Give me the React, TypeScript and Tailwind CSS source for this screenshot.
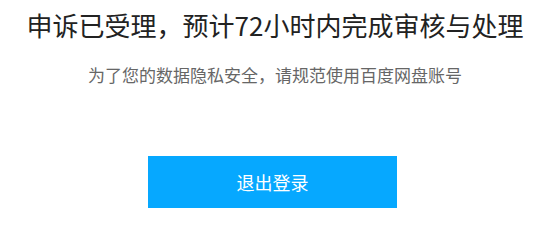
export default function App() {
  return (
    <div className="flex h-[217px] w-[550px] flex-col items-center bg-white font-['Noto_Sans_CJK_SC',sans-serif]">
      <h1 className="mt-[10px] text-[26px] leading-[30px] font-normal text-[#222]">
        申诉已受理，预计72小时内完成审核与处理
      </h1>
      <p className="mt-[23px] text-[17px] leading-[24px] text-[#666]">
        为了您的数据隐私安全，请规范使用百度网盘账号
      </p>
      <button className="mt-[69px] mr-[5px] flex h-[52px] w-[249px] items-center justify-center bg-[#06a8ff] text-[18px] text-white">
        退出登录
      </button>
    </div>
  );
}
